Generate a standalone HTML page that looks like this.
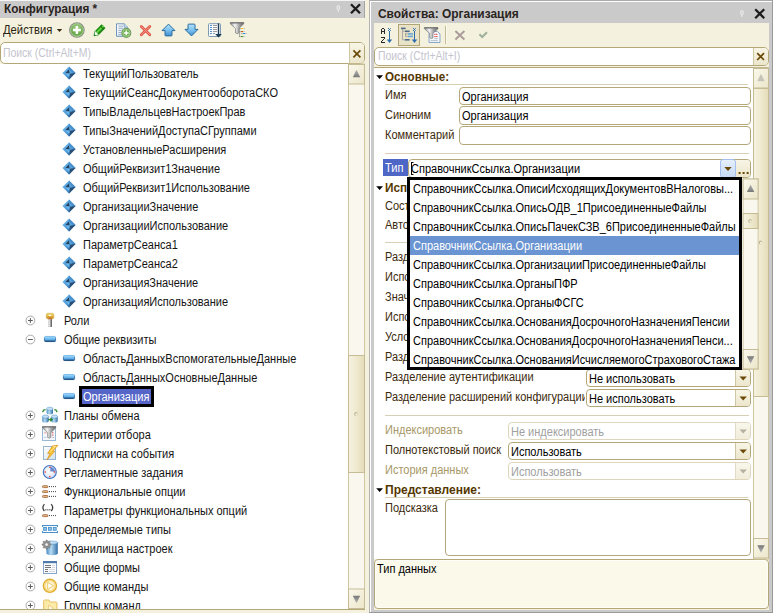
<!DOCTYPE html>
<html><head><meta charset="utf-8"><title>1C</title><style>
html,body{margin:0;padding:0;}
body{width:773px;height:613px;overflow:hidden;background:#f4f2de;font-family:"Liberation Sans",sans-serif;font-size:12px;color:#141414;position:relative;}
.a{position:absolute;}
.t{position:absolute;white-space:nowrap;font-size:12px;line-height:14px;height:14px;transform:scaleX(.917);transform-origin:0 50%;}
.b{position:absolute;white-space:nowrap;font-size:12px;line-height:14px;height:14px;font-weight:bold;transform:scaleX(.98);transform-origin:0 50%;}
.fld{position:absolute;background:#fff;border:1px solid #b5a878;border-radius:4px;box-sizing:border-box;}
.fldd{position:absolute;background:#fff;border:1px solid #ddd6bc;border-radius:4px;box-sizing:border-box;}
.btn{position:absolute;box-sizing:border-box;background:linear-gradient(180deg,#f8f5e6,#ece6cc);border-left:1px solid #cfc6a4;}
.btnd{position:absolute;box-sizing:border-box;background:linear-gradient(180deg,#f9f7ec,#f1edda);border-left:1px solid #e2dcc6;}
svg{position:absolute;left:0;top:0;overflow:visible;}
</style></head><body>
<div class="a" style="left:0;top:0;width:365px;height:1px;background:#f4f4f4"></div>
<div class="a" style="left:0;top:1px;width:365px;height:17px;background:#cacaca"></div>
<div class="a" style="left:364px;top:1px;width:1px;height:17px;background:#a4a4a4"></div>
<div class="b" style="left:4px;top:2px;color:#2a2421;">Конфигурация *</div>
<div class="t" style="left:3px;top:23px;color:#2a2210;transform:scaleX(.937)">Действия</div>
<div class="fld" style="left:0px;top:42px;width:365px;height:22px;border-radius:5px;overflow:hidden"><div class="btn" style="right:0;top:0;width:15px;height:20px"></div></div>
<div class="t" style="left:3px;top:45.5px;color:#c4c4ce;transform:scaleX(.868)">Поиск (Ctrl+Alt+M)</div>
<div class="a" style="left:0;top:64px;width:348px;height:545px;background:#fff"></div>
<div class="a" style="left:0;top:64px;width:348px;height:545px;overflow:hidden">
<div class="t" style="left:83px;top:3px">ТекущийПользователь</div>
<div class="t" style="left:83px;top:22px">ТекущийСеансДокументооборотаСКО</div>
<div class="t" style="left:83px;top:41px">ТипыВладельцевНастроекПрав</div>
<div class="t" style="left:83px;top:60px">ТипыЗначенийДоступаСГруппами</div>
<div class="t" style="left:83px;top:79px">УстановленныеРасширения</div>
<div class="t" style="left:83px;top:98px">ОбщийРеквизит1Значение</div>
<div class="t" style="left:83px;top:117px">ОбщийРеквизит1Использование</div>
<div class="t" style="left:83px;top:136px">ОрганизацииЗначение</div>
<div class="t" style="left:83px;top:155px">ОрганизацииИспользование</div>
<div class="t" style="left:83px;top:174px">ПараметрСеанса1</div>
<div class="t" style="left:83px;top:193px">ПараметрСеанса2</div>
<div class="t" style="left:83px;top:212px">ОрганизацияЗначение</div>
<div class="t" style="left:83px;top:231px">ОрганизацияИспользование</div>
<div class="t" style="left:64px;top:250px">Роли</div>
<div class="t" style="left:64px;top:269px">Общие реквизиты</div>
<div class="t" style="left:83px;top:288px">ОбластьДанныхВспомогательныеДанные</div>
<div class="t" style="left:83px;top:307px">ОбластьДанныхОсновныеДанные</div>
<div class="a" style="left:79px;top:322px;width:75px;height:21px;background:#000"></div>
<div class="a" style="left:82px;top:325px;width:69px;height:15px;background:#5666c8"></div>
<div class="t" style="left:83px;top:326px;color:#fff">Организация</div>
<div class="t" style="left:64px;top:345px">Планы обмена</div>
<div class="t" style="left:64px;top:364px">Критерии отбора</div>
<div class="t" style="left:64px;top:383px">Подписки на события</div>
<div class="t" style="left:64px;top:402px">Регламентные задания</div>
<div class="t" style="left:64px;top:421px">Функциональные опции</div>
<div class="t" style="left:64px;top:440px">Параметры функциональных опций</div>
<div class="t" style="left:64px;top:459px">Определяемые типы</div>
<div class="t" style="left:64px;top:478px">Хранилища настроек</div>
<div class="t" style="left:64px;top:497px">Общие формы</div>
<div class="t" style="left:64px;top:516px">Общие команды</div>
<div class="t" style="left:64px;top:535px">Группы команд</div>
<svg width="348" height="545" viewBox="0 0 348 545">
<defs>
<linearGradient id="gBar" x1="0" y1="0" x2="0" y2="1"><stop offset="0" stop-color="#a8dcfb"/><stop offset=".5" stop-color="#6cb8ee"/><stop offset="1" stop-color="#3b8ad2"/></linearGradient>
<linearGradient id="gBarS" x1="0" y1="0" x2="0" y2="1"><stop offset="0" stop-color="#74b8ea"/><stop offset=".5" stop-color="#3a78b4"/><stop offset="1" stop-color="#1b4a78"/></linearGradient>
<linearGradient id="gDia" x1="0" y1="0" x2="1" y2="1"><stop offset="0" stop-color="#7cc4f4"/><stop offset=".5" stop-color="#4f9ad6"/><stop offset="1" stop-color="#2f6ea6"/></linearGradient>
<radialGradient id="gGreen" cx=".5" cy=".35" r=".75"><stop offset="0" stop-color="#a8d090"/><stop offset=".6" stop-color="#69a94a"/><stop offset="1" stop-color="#86bd68"/></radialGradient>
<linearGradient id="gArr" x1="0" y1="0" x2="0" y2="1"><stop offset="0" stop-color="#b4e2fc"/><stop offset=".5" stop-color="#7cc2f0"/><stop offset="1" stop-color="#3f8ed0"/></linearGradient>
<linearGradient id="gFun" x1="0" y1="0" x2="1" y2="0"><stop offset="0" stop-color="#8a8a8a"/><stop offset=".35" stop-color="#f4f4f4"/><stop offset=".7" stop-color="#9a9a9a"/><stop offset="1" stop-color="#6a6a6a"/></linearGradient>
<linearGradient id="gCyl" x1="0" y1="0" x2="1" y2="0"><stop offset="0" stop-color="#4a8cc4"/><stop offset=".4" stop-color="#b8dcf4"/><stop offset="1" stop-color="#2f6ea6"/></linearGradient>
<radialGradient id="gGold" cx=".5" cy=".5" r=".6"><stop offset="0" stop-color="#fff6d8"/><stop offset=".55" stop-color="#f6d46a"/><stop offset="1" stop-color="#d8a420"/></radialGradient>
<radialGradient id="gClock" cx=".45" cy=".45" r=".6"><stop offset="0" stop-color="#ffffff"/><stop offset=".7" stop-color="#dfe8f8"/><stop offset="1" stop-color="#b8c8ea"/></radialGradient>
<linearGradient id="gDoc" x1="0" y1="0" x2="1" y2="1"><stop offset="0" stop-color="#ffffff"/><stop offset="1" stop-color="#cfe0f0"/></linearGradient>
<linearGradient id="gSb" x1="0" y1="0" x2="1" y2="0"><stop offset="0" stop-color="#f6f2e0"/><stop offset=".5" stop-color="#efe9cf"/><stop offset="1" stop-color="#e4dcb8"/></linearGradient>
<linearGradient id="gSbBtn" x1="0" y1="0" x2="1" y2="1"><stop offset="0" stop-color="#fbf9ee"/><stop offset="1" stop-color="#ebe5c8"/></linearGradient>
<linearGradient id="gTri" x1="0" y1="0" x2="0" y2="1"><stop offset="0" stop-color="#b8b8b8"/><stop offset="1" stop-color="#787878"/></linearGradient>
<linearGradient id="gTriD" x1="0" y1="0" x2="0" y2="1"><stop offset="0" stop-color="#787878"/><stop offset="1" stop-color="#b8b8b8"/></linearGradient>
<linearGradient id="gKey" x1="0" y1="0" x2="0" y2="1"><stop offset="0" stop-color="#f2dc7c"/><stop offset=".55" stop-color="#dcb23c"/><stop offset="1" stop-color="#c88a30"/></linearGradient>
</defs>
<g transform="translate(69,9)"><path d="M0 -6.6L6.6 0L0 6.6L-6.6 0Z" fill="url(#gDia)"/><path d="M0 -6.6L6.6 0L3.6 0.2L0 -3.6Z" fill="#4a90cc"/><path d="M0.8 0.6L6.3999999999999995 0.1L0.1 6.3999999999999995Z" fill="#2b4f72"/><path d="M0.8 0.6L0.1 6.3999999999999995L-1.6 4.8Z" fill="#3f7fb8"/><path d="M-3.7 0.2L0 -3.7L0.8 0.6Z" fill="#25405a"/><path d="M-3.7 0.2L0.8 0.6L0 3.9Z" fill="#68b6f0"/><path d="M0 -3.7L0.8 0.6L3.6 0.2Z" fill="#5aa4e0"/></g><g transform="translate(69,28)"><path d="M0 -6.6L6.6 0L0 6.6L-6.6 0Z" fill="url(#gDia)"/><path d="M0 -6.6L6.6 0L3.6 0.2L0 -3.6Z" fill="#4a90cc"/><path d="M0.8 0.6L6.3999999999999995 0.1L0.1 6.3999999999999995Z" fill="#2b4f72"/><path d="M0.8 0.6L0.1 6.3999999999999995L-1.6 4.8Z" fill="#3f7fb8"/><path d="M-3.7 0.2L0 -3.7L0.8 0.6Z" fill="#25405a"/><path d="M-3.7 0.2L0.8 0.6L0 3.9Z" fill="#68b6f0"/><path d="M0 -3.7L0.8 0.6L3.6 0.2Z" fill="#5aa4e0"/></g><g transform="translate(69,47)"><path d="M0 -6.6L6.6 0L0 6.6L-6.6 0Z" fill="url(#gDia)"/><path d="M0 -6.6L6.6 0L3.6 0.2L0 -3.6Z" fill="#4a90cc"/><path d="M0.8 0.6L6.3999999999999995 0.1L0.1 6.3999999999999995Z" fill="#2b4f72"/><path d="M0.8 0.6L0.1 6.3999999999999995L-1.6 4.8Z" fill="#3f7fb8"/><path d="M-3.7 0.2L0 -3.7L0.8 0.6Z" fill="#25405a"/><path d="M-3.7 0.2L0.8 0.6L0 3.9Z" fill="#68b6f0"/><path d="M0 -3.7L0.8 0.6L3.6 0.2Z" fill="#5aa4e0"/></g><g transform="translate(69,66)"><path d="M0 -6.6L6.6 0L0 6.6L-6.6 0Z" fill="url(#gDia)"/><path d="M0 -6.6L6.6 0L3.6 0.2L0 -3.6Z" fill="#4a90cc"/><path d="M0.8 0.6L6.3999999999999995 0.1L0.1 6.3999999999999995Z" fill="#2b4f72"/><path d="M0.8 0.6L0.1 6.3999999999999995L-1.6 4.8Z" fill="#3f7fb8"/><path d="M-3.7 0.2L0 -3.7L0.8 0.6Z" fill="#25405a"/><path d="M-3.7 0.2L0.8 0.6L0 3.9Z" fill="#68b6f0"/><path d="M0 -3.7L0.8 0.6L3.6 0.2Z" fill="#5aa4e0"/></g><g transform="translate(69,85)"><path d="M0 -6.6L6.6 0L0 6.6L-6.6 0Z" fill="url(#gDia)"/><path d="M0 -6.6L6.6 0L3.6 0.2L0 -3.6Z" fill="#4a90cc"/><path d="M0.8 0.6L6.3999999999999995 0.1L0.1 6.3999999999999995Z" fill="#2b4f72"/><path d="M0.8 0.6L0.1 6.3999999999999995L-1.6 4.8Z" fill="#3f7fb8"/><path d="M-3.7 0.2L0 -3.7L0.8 0.6Z" fill="#25405a"/><path d="M-3.7 0.2L0.8 0.6L0 3.9Z" fill="#68b6f0"/><path d="M0 -3.7L0.8 0.6L3.6 0.2Z" fill="#5aa4e0"/></g><g transform="translate(69,104)"><path d="M0 -6.6L6.6 0L0 6.6L-6.6 0Z" fill="url(#gDia)"/><path d="M0 -6.6L6.6 0L3.6 0.2L0 -3.6Z" fill="#4a90cc"/><path d="M0.8 0.6L6.3999999999999995 0.1L0.1 6.3999999999999995Z" fill="#2b4f72"/><path d="M0.8 0.6L0.1 6.3999999999999995L-1.6 4.8Z" fill="#3f7fb8"/><path d="M-3.7 0.2L0 -3.7L0.8 0.6Z" fill="#25405a"/><path d="M-3.7 0.2L0.8 0.6L0 3.9Z" fill="#68b6f0"/><path d="M0 -3.7L0.8 0.6L3.6 0.2Z" fill="#5aa4e0"/></g><g transform="translate(69,123)"><path d="M0 -6.6L6.6 0L0 6.6L-6.6 0Z" fill="url(#gDia)"/><path d="M0 -6.6L6.6 0L3.6 0.2L0 -3.6Z" fill="#4a90cc"/><path d="M0.8 0.6L6.3999999999999995 0.1L0.1 6.3999999999999995Z" fill="#2b4f72"/><path d="M0.8 0.6L0.1 6.3999999999999995L-1.6 4.8Z" fill="#3f7fb8"/><path d="M-3.7 0.2L0 -3.7L0.8 0.6Z" fill="#25405a"/><path d="M-3.7 0.2L0.8 0.6L0 3.9Z" fill="#68b6f0"/><path d="M0 -3.7L0.8 0.6L3.6 0.2Z" fill="#5aa4e0"/></g><g transform="translate(69,142)"><path d="M0 -6.6L6.6 0L0 6.6L-6.6 0Z" fill="url(#gDia)"/><path d="M0 -6.6L6.6 0L3.6 0.2L0 -3.6Z" fill="#4a90cc"/><path d="M0.8 0.6L6.3999999999999995 0.1L0.1 6.3999999999999995Z" fill="#2b4f72"/><path d="M0.8 0.6L0.1 6.3999999999999995L-1.6 4.8Z" fill="#3f7fb8"/><path d="M-3.7 0.2L0 -3.7L0.8 0.6Z" fill="#25405a"/><path d="M-3.7 0.2L0.8 0.6L0 3.9Z" fill="#68b6f0"/><path d="M0 -3.7L0.8 0.6L3.6 0.2Z" fill="#5aa4e0"/></g><g transform="translate(69,161)"><path d="M0 -6.6L6.6 0L0 6.6L-6.6 0Z" fill="url(#gDia)"/><path d="M0 -6.6L6.6 0L3.6 0.2L0 -3.6Z" fill="#4a90cc"/><path d="M0.8 0.6L6.3999999999999995 0.1L0.1 6.3999999999999995Z" fill="#2b4f72"/><path d="M0.8 0.6L0.1 6.3999999999999995L-1.6 4.8Z" fill="#3f7fb8"/><path d="M-3.7 0.2L0 -3.7L0.8 0.6Z" fill="#25405a"/><path d="M-3.7 0.2L0.8 0.6L0 3.9Z" fill="#68b6f0"/><path d="M0 -3.7L0.8 0.6L3.6 0.2Z" fill="#5aa4e0"/></g><g transform="translate(69,180)"><path d="M0 -6.6L6.6 0L0 6.6L-6.6 0Z" fill="url(#gDia)"/><path d="M0 -6.6L6.6 0L3.6 0.2L0 -3.6Z" fill="#4a90cc"/><path d="M0.8 0.6L6.3999999999999995 0.1L0.1 6.3999999999999995Z" fill="#2b4f72"/><path d="M0.8 0.6L0.1 6.3999999999999995L-1.6 4.8Z" fill="#3f7fb8"/><path d="M-3.7 0.2L0 -3.7L0.8 0.6Z" fill="#25405a"/><path d="M-3.7 0.2L0.8 0.6L0 3.9Z" fill="#68b6f0"/><path d="M0 -3.7L0.8 0.6L3.6 0.2Z" fill="#5aa4e0"/></g><g transform="translate(69,199)"><path d="M0 -6.6L6.6 0L0 6.6L-6.6 0Z" fill="url(#gDia)"/><path d="M0 -6.6L6.6 0L3.6 0.2L0 -3.6Z" fill="#4a90cc"/><path d="M0.8 0.6L6.3999999999999995 0.1L0.1 6.3999999999999995Z" fill="#2b4f72"/><path d="M0.8 0.6L0.1 6.3999999999999995L-1.6 4.8Z" fill="#3f7fb8"/><path d="M-3.7 0.2L0 -3.7L0.8 0.6Z" fill="#25405a"/><path d="M-3.7 0.2L0.8 0.6L0 3.9Z" fill="#68b6f0"/><path d="M0 -3.7L0.8 0.6L3.6 0.2Z" fill="#5aa4e0"/></g><g transform="translate(69,218)"><path d="M0 -6.6L6.6 0L0 6.6L-6.6 0Z" fill="url(#gDia)"/><path d="M0 -6.6L6.6 0L3.6 0.2L0 -3.6Z" fill="#4a90cc"/><path d="M0.8 0.6L6.3999999999999995 0.1L0.1 6.3999999999999995Z" fill="#2b4f72"/><path d="M0.8 0.6L0.1 6.3999999999999995L-1.6 4.8Z" fill="#3f7fb8"/><path d="M-3.7 0.2L0 -3.7L0.8 0.6Z" fill="#25405a"/><path d="M-3.7 0.2L0.8 0.6L0 3.9Z" fill="#68b6f0"/><path d="M0 -3.7L0.8 0.6L3.6 0.2Z" fill="#5aa4e0"/></g><g transform="translate(69,237)"><path d="M0 -6.6L6.6 0L0 6.6L-6.6 0Z" fill="url(#gDia)"/><path d="M0 -6.6L6.6 0L3.6 0.2L0 -3.6Z" fill="#4a90cc"/><path d="M0.8 0.6L6.3999999999999995 0.1L0.1 6.3999999999999995Z" fill="#2b4f72"/><path d="M0.8 0.6L0.1 6.3999999999999995L-1.6 4.8Z" fill="#3f7fb8"/><path d="M-3.7 0.2L0 -3.7L0.8 0.6Z" fill="#25405a"/><path d="M-3.7 0.2L0.8 0.6L0 3.9Z" fill="#68b6f0"/><path d="M0 -3.7L0.8 0.6L3.6 0.2Z" fill="#5aa4e0"/></g><circle cx="30.4" cy="256.5" r="4.4" fill="#fff" stroke="#a4a4a4" stroke-width="1"/><circle cx="30.4" cy="256.5" r="5.1" fill="none" stroke="#ececec" stroke-width=".5"/><rect x="28.0" y="256.0" width="4.8" height="1" fill="#5c5c5c"/><rect x="29.9" y="254.1" width="1" height="4.8" fill="#5c5c5c"/><rect x="48.2" y="254.6" width="3.7" height="8.4" fill="#b4b4b4"/><rect x="48.9" y="254.6" width="1.2" height="8.4" fill="#dedede"/><rect x="50.7" y="254.6" width="1.2" height="8.4" fill="#666"/><rect x="48.2" y="256.4" width=".9" height="1" fill="#fff"/><rect x="48.2" y="258.6" width=".9" height="1" fill="#fff"/><rect x="48.2" y="260.8" width=".9" height="1" fill="#fff"/><rect x="46.3" y="249.3" width="7.5" height="5.5" rx="1.5" fill="url(#gKey)" stroke="#d4a83c" stroke-width=".6"/><rect x="48.6" y="250.7" width="2.8" height="1.3" rx=".6" fill="#fffbe6"/><ellipse cx="50" cy="254.2" rx="1.8" ry="1" fill="#d06a28" opacity=".8"/><circle cx="30.4" cy="275.5" r="4.4" fill="#fff" stroke="#a4a4a4" stroke-width="1"/><circle cx="30.4" cy="275.5" r="5.1" fill="none" stroke="#ececec" stroke-width=".5"/><rect x="28.0" y="275.0" width="4.8" height="1" fill="#5c5c5c"/><rect x="44.45" y="272.45" width="11.1" height="5.1" rx="1" fill="url(#gBar)" stroke="url(#gBarS)" stroke-width=".9"/><rect x="45" y="276.6" width="10" height="1" rx=".5" fill="#1b4a78" opacity=".75"/><rect x="63.45" y="291.45" width="11.1" height="5.1" rx="1" fill="url(#gBar)" stroke="url(#gBarS)" stroke-width=".9"/><rect x="64" y="295.6" width="10" height="1" rx=".5" fill="#1b4a78" opacity=".75"/><rect x="63.45" y="310.45" width="11.1" height="5.1" rx="1" fill="url(#gBar)" stroke="url(#gBarS)" stroke-width=".9"/><rect x="64" y="314.6" width="10" height="1" rx=".5" fill="#1b4a78" opacity=".75"/><rect x="63.45" y="329.45" width="11.1" height="5.1" rx="1" fill="url(#gBar)" stroke="url(#gBarS)" stroke-width=".9"/><rect x="64" y="333.6" width="10" height="1" rx=".5" fill="#1b4a78" opacity=".75"/><circle cx="30.4" cy="351.5" r="4.4" fill="#fff" stroke="#a4a4a4" stroke-width="1"/><circle cx="30.4" cy="351.5" r="5.1" fill="none" stroke="#ececec" stroke-width=".5"/><rect x="28.0" y="351.0" width="4.8" height="1" fill="#5c5c5c"/><rect x="29.9" y="349.1" width="1" height="4.8" fill="#5c5c5c"/><path d="M46.6 344.8V348.79999999999995A3.2 1.6 0 0 0 53.0 348.79999999999995V344.8Z" fill="url(#gCyl)"/><ellipse cx="49.800000000000004" cy="344.8" rx="3.2" ry="1.6" fill="#c4e0f4" stroke="#4a8cc4" stroke-width=".5"/><path d="M42.3 352.6V357.0A3.2 1.6 0 0 0 48.699999999999996 357.0V352.6Z" fill="url(#gCyl)"/><ellipse cx="45.5" cy="352.6" rx="3.2" ry="1.6" fill="#c4e0f4" stroke="#4a8cc4" stroke-width=".5"/><path d="M51.3 352.6V357.0A3.2 1.6 0 0 0 57.699999999999996 357.0V352.6Z" fill="url(#gCyl)"/><ellipse cx="54.5" cy="352.6" rx="3.2" ry="1.6" fill="#c4e0f4" stroke="#4a8cc4" stroke-width=".5"/><path d="M42.2 345.2h3.4v1.2l-1-.2l-1.6 2.2l-1-.8l1.6-2z" fill="#2f8a2f"/><path d="M57.6 345.2h-3.4v1.2l1-.2l1.6 2.2l1-.8l-1.6-2z" fill="#2f8a2f" transform="translate(0,0)"/><path d="M48 355.6h4M50.4 354l1.8 1.6l-1.8 1.6" stroke="#2f8a2f" stroke-width="1.2" fill="none"/><circle cx="30.4" cy="370.5" r="4.4" fill="#fff" stroke="#a4a4a4" stroke-width="1"/><circle cx="30.4" cy="370.5" r="5.1" fill="none" stroke="#ececec" stroke-width=".5"/><rect x="28.0" y="370.0" width="4.8" height="1" fill="#5c5c5c"/><rect x="29.9" y="368.1" width="1" height="4.8" fill="#5c5c5c"/><rect x="42.5" y="363.5" width="13" height="13" fill="#f4f8fc" stroke="#9ab8d4" stroke-width="1"/><rect x="44" y="368.3" width="2.6" height="1" fill="#e8a0a0"/><rect x="52" y="368.3" width="1.4" height="1" fill="#e05050"/><rect x="52" y="370.6" width="1.4" height="1" fill="#e05050"/><rect x="44" y="373" width="2.4" height=".9" fill="#b8cce0"/><rect x="52.6" y="373" width="1.2" height=".9" fill="#8aa4c0"/><path d="M42.4 362.6H55.8V363.8L50.842 368.632V373.40000000000003Q49.233999999999995 374.80000000000007 47.626 373.40000000000003V368.632L42.4 363.8Z" fill="url(#gFun)" stroke="#6e6e6e" stroke-width=".6"/><rect x="42.4" y="362.20000000000005" width="13.4" height="1.2" rx=".5" fill="#777"/><circle cx="30.4" cy="389.5" r="4.4" fill="#fff" stroke="#a4a4a4" stroke-width="1"/><circle cx="30.4" cy="389.5" r="5.1" fill="none" stroke="#ececec" stroke-width=".5"/><rect x="28.0" y="389.0" width="4.8" height="1" fill="#5c5c5c"/><rect x="29.9" y="387.1" width="1" height="4.8" fill="#5c5c5c"/><rect x="43.5" y="382.5" width="12" height="13" fill="url(#gDoc)" stroke="#9ab4cc" stroke-width="1"/><path d="M52.6 381.8L58 381.3L52.6 387.4L54.8 387.3L47 395.9L50 389.3L47.6 389.5Z" fill="#f8c432" stroke="#d68c12" stroke-width=".6"/><path d="M53 382.6L55.6 382.4L50.4 388" fill="none" stroke="#fff2b0" stroke-width=".8"/><circle cx="30.4" cy="408.5" r="4.4" fill="#fff" stroke="#a4a4a4" stroke-width="1"/><circle cx="30.4" cy="408.5" r="5.1" fill="none" stroke="#ececec" stroke-width=".5"/><rect x="28.0" y="408.0" width="4.8" height="1" fill="#5c5c5c"/><rect x="29.9" y="406.1" width="1" height="4.8" fill="#5c5c5c"/><circle cx="49.8" cy="408" r="6.5" fill="url(#gClock)" stroke="#4174c2" stroke-width="1.1"/><path d="M49.8 408V402.8A5.2 5.2 0 0 1 55.0 408Z" fill="#5a7cc8" opacity=".9"/><rect x="49.099999999999994" y="402.7" width="1.4" height="1.4" fill="#f04030"/><rect x="53.699999999999996" y="407.3" width="1.4" height="1.4" fill="#f04030"/><rect x="49.099999999999994" y="411.90000000000003" width="1.4" height="1.4" fill="#f04030"/><rect x="44.49999999999999" y="407.3" width="1.4" height="1.4" fill="#f04030"/><path d="M49.8 404V408H53.4" stroke="#fff" stroke-width="1" fill="none"/><circle cx="30.4" cy="427.5" r="4.4" fill="#fff" stroke="#a4a4a4" stroke-width="1"/><circle cx="30.4" cy="427.5" r="5.1" fill="none" stroke="#ececec" stroke-width=".5"/><rect x="28.0" y="427.0" width="4.8" height="1" fill="#5c5c5c"/><rect x="29.9" y="425.1" width="1" height="4.8" fill="#5c5c5c"/><rect x="42.4" y="421.7" width="5.6" height="1.9" rx=".95" fill="#e6bc90" stroke="#a0602c" stroke-width=".8"/><rect x="49" y="422.09999999999997" width="1" height="1" fill="#444"/><rect x="51" y="422.09999999999997" width="1" height="1" fill="#444"/><rect x="53" y="422.09999999999997" width="1" height="1" fill="#444"/><rect x="55" y="422.09999999999997" width="1" height="1" fill="#444"/><rect x="42.4" y="426.7" width="5.6" height="1.9" rx=".95" fill="#e6bc90" stroke="#a0602c" stroke-width=".8"/><rect x="49" y="427.09999999999997" width="1" height="1" fill="#444"/><rect x="51" y="427.09999999999997" width="1" height="1" fill="#444"/><rect x="53" y="427.09999999999997" width="1" height="1" fill="#444"/><rect x="55" y="427.09999999999997" width="1" height="1" fill="#444"/><rect x="42.4" y="431.5" width="5.6" height="1.9" rx=".95" fill="#e6bc90" stroke="#a0602c" stroke-width=".8"/><rect x="49" y="431.9" width="1" height="1" fill="#444"/><rect x="51" y="431.9" width="1" height="1" fill="#444"/><rect x="53" y="431.9" width="1" height="1" fill="#444"/><rect x="55" y="431.9" width="1" height="1" fill="#444"/><circle cx="30.4" cy="446.5" r="4.4" fill="#fff" stroke="#a4a4a4" stroke-width="1"/><circle cx="30.4" cy="446.5" r="5.1" fill="none" stroke="#ececec" stroke-width=".5"/><rect x="28.0" y="446.0" width="4.8" height="1" fill="#5c5c5c"/><rect x="29.9" y="444.1" width="1" height="4.8" fill="#5c5c5c"/><rect x="42.4" y="450.7" width="5.6" height="1.9" rx=".95" fill="#e6bc90" stroke="#a0602c" stroke-width=".8"/><rect x="49" y="451.09999999999997" width="1" height="1" fill="#444"/><rect x="51" y="451.09999999999997" width="1" height="1" fill="#444"/><rect x="53" y="451.09999999999997" width="1" height="1" fill="#444"/><rect x="55" y="451.09999999999997" width="1" height="1" fill="#444"/><path d="M44.4 440.2Q41.4 443.6 44.4 447M51.2 440.2Q54.2 443.6 51.2 447" stroke="#3c3c3c" stroke-width="1.25" fill="none"/><rect x="45.3" y="445.2" width="1.1" height="1.2" fill="#3c3c3c"/><rect x="47.3" y="445.2" width="1.1" height="1.2" fill="#3c3c3c"/><rect x="49.3" y="445.2" width="1.1" height="1.2" fill="#3c3c3c"/><circle cx="30.4" cy="465.5" r="4.4" fill="#fff" stroke="#a4a4a4" stroke-width="1"/><circle cx="30.4" cy="465.5" r="5.1" fill="none" stroke="#ececec" stroke-width=".5"/><rect x="28.0" y="465.0" width="4.8" height="1" fill="#5c5c5c"/><rect x="29.9" y="463.1" width="1" height="4.8" fill="#5c5c5c"/><rect x="42" y="461" width="16" height="1" fill="#4790cc"/><rect x="42" y="468" width="16" height="1" fill="#4790cc"/><rect x="42" y="461" width="1" height="2" fill="#4790cc"/><rect x="57" y="461" width="1" height="2" fill="#4790cc"/><rect x="42" y="467" width="1" height="2" fill="#4790cc"/><rect x="57" y="467" width="1" height="2" fill="#4790cc"/><rect x="43.6" y="463.4" width="2.9" height="2.9" fill="#8ec6ee" stroke="#4790cc" stroke-width=".9"/><rect x="48.45" y="463.4" width="2.9" height="2.9" fill="#8ec6ee" stroke="#4790cc" stroke-width=".9"/><rect x="53.3" y="463.4" width="2.9" height="2.9" fill="#8ec6ee" stroke="#4790cc" stroke-width=".9"/><circle cx="30.4" cy="484.5" r="4.4" fill="#fff" stroke="#a4a4a4" stroke-width="1"/><circle cx="30.4" cy="484.5" r="5.1" fill="none" stroke="#ececec" stroke-width=".5"/><rect x="28.0" y="484.0" width="4.8" height="1" fill="#5c5c5c"/><rect x="29.9" y="482.1" width="1" height="4.8" fill="#5c5c5c"/><path d="M46.4 478.6V489.59999999999997A5.7 1.6 0 0 0 57.8 489.59999999999997V478.6Z" fill="url(#gCyl)"/><ellipse cx="52.1" cy="478.6" rx="5.7" ry="1.6" fill="#c4e0f4" stroke="#4a8cc4" stroke-width=".5"/><path d="M51.17 480.10L51.17 481.10L49.78 481.52L49.50 482.20L50.19 483.48L49.48 484.19L48.20 483.50L47.52 483.78L47.10 485.17L46.10 485.17L45.68 483.78L45.00 483.50L43.72 484.19L43.01 483.48L43.70 482.20L43.42 481.52L42.03 481.10L42.03 480.10L43.42 479.68L43.70 479.00L43.01 477.72L43.72 477.01L45.00 477.70L45.68 477.42L46.10 476.03L47.10 476.03L47.52 477.42L48.20 477.70L49.48 477.01L50.19 477.72L49.50 479.00L49.78 479.68Z" fill="#8e8e8e" stroke="#747474" stroke-width=".5"/><circle cx="46.6" cy="480.6" r="1.4" fill="#f0f0f0"/><circle cx="30.4" cy="503.5" r="4.4" fill="#fff" stroke="#a4a4a4" stroke-width="1"/><circle cx="30.4" cy="503.5" r="5.1" fill="none" stroke="#ececec" stroke-width=".5"/><rect x="28.0" y="503.0" width="4.8" height="1" fill="#5c5c5c"/><rect x="29.9" y="501.1" width="1" height="4.8" fill="#5c5c5c"/><rect x="43.5" y="497.5" width="13" height="12" fill="#fbfcfe" stroke="#86a6c8" stroke-width="1"/><rect x="43" y="497" width="14" height="2.2" fill="#4f7cac"/><rect x="45" y="501" width="6" height="1" fill="#767676"/><rect x="52" y="501" width="3" height="1" fill="#d4d8e0"/><rect x="45" y="503" width="6" height="1" fill="#767676"/><rect x="52" y="503" width="3" height="1" fill="#d4d8e0"/><rect x="45" y="505" width="3" height="1" fill="#767676"/><rect x="49" y="505" width="6" height="1" fill="#d4d8e0"/><rect x="45" y="507" width="3" height="1" fill="#767676"/><rect x="49" y="507" width="6" height="1" fill="#d4d8e0"/><circle cx="30.4" cy="522.5" r="4.4" fill="#fff" stroke="#a4a4a4" stroke-width="1"/><circle cx="30.4" cy="522.5" r="5.1" fill="none" stroke="#ececec" stroke-width=".5"/><rect x="28.0" y="522.0" width="4.8" height="1" fill="#5c5c5c"/><rect x="29.9" y="520.1" width="1" height="4.8" fill="#5c5c5c"/><circle cx="49.9" cy="521.8" r="6.5" fill="#fdf3d2" stroke="#e2ae32" stroke-width="1.5"/><circle cx="49.9" cy="521.8" r="5.2" fill="none" stroke="#f6d878" stroke-width="1.2"/><path d="M47.699999999999996 518.4L53.5 521.8L47.699999999999996 525.1999999999999Z" fill="#fff" stroke="#e8c050" stroke-width=".8"/><circle cx="30.4" cy="541.5" r="4.4" fill="#fff" stroke="#a4a4a4" stroke-width="1"/><circle cx="30.4" cy="541.5" r="5.1" fill="none" stroke="#ececec" stroke-width=".5"/><rect x="28.0" y="541.0" width="4.8" height="1" fill="#5c5c5c"/><rect x="29.9" y="539.1" width="1" height="4.8" fill="#5c5c5c"/><path d="M43.6 537.2Q43.6 536.0 44.800000000000004 536.0H49.0L50.2 538.0H56.0Q57.0 538.0 57.0 539.2V550.6H43.6Z" fill="#fbeaa8" stroke="#e2bc58" stroke-width=".9"/><path d="M48.6 541.0L53.2 544.2L48.6 547.4Z" fill="#fffbe8" stroke="#e2bc58" stroke-width=".6"/></svg>
</div>
<div class="a" style="left:369px;top:0;width:404px;height:613px;background:#cacaca"></div>
<div class="a" style="left:369px;top:0;width:404px;height:1px;background:#aaaaaa"></div>
<div class="a" style="left:369px;top:0;width:1px;height:613px;background:#b4b4b4"></div>
<div class="a" style="left:370px;top:1px;width:402px;height:1px;background:#fff"></div>
<div class="a" style="left:370px;top:1px;width:1px;height:611px;background:#fff"></div>
<div class="a" style="left:369px;top:612px;width:404px;height:1px;background:#9a9a9a"></div>
<div class="a" style="left:772px;top:0;width:1px;height:613px;background:#9a9a9a"></div>
<div class="a" style="left:374px;top:23px;width:395px;height:587px;background:#f4f2de"></div>
<div class="b" style="left:378px;top:7px;color:#2a2421;transform:scaleX(.994)">Свойства: Организация</div>
<div class="fld" style="left:374px;top:47px;width:395px;height:19px;border-radius:5px;overflow:hidden"><div class="btn" style="right:0;top:0;width:15px;height:17px"></div></div>
<div class="t" style="left:378px;top:48.8px;color:#c4c4ce;transform:scaleX(.868)">Поиск (Ctrl+Alt+I)</div>
<div class="a" style="left:374px;top:68px;width:380px;height:491px;background:#fff"></div>
<div class="a" style="left:374px;top:67px;width:395px;height:1px;background:#b5a878"></div>
<div class="b" style="left:385px;top:70px;color:#543700;transform:scaleX(0.97)">Основные:</div>
<div class="a" style="left:385px;top:84px;width:363px;height:1px;background:#d8d0b4"></div>
<div class="b" style="left:385px;top:483px;color:#543700;transform:scaleX(1.0)">Представление:</div>
<div class="a" style="left:385px;top:497px;width:363px;height:1px;background:#d8d0b4"></div>
<div class="t" style="left:385.4px;top:88px;color:#3c2a0c;">Имя</div>
<div class="t" style="left:385.4px;top:108px;color:#3c2a0c;">Синоним</div>
<div class="t" style="left:385.4px;top:128px;color:#3c2a0c;">Комментарий</div>
<div class="fld" style="left:459px;top:87px;width:292px;height:18px"></div>
<div class="fld" style="left:459px;top:106px;width:292px;height:19px"></div>
<div class="fld" style="left:459px;top:126px;width:292px;height:19px"></div>
<div class="t" style="left:462px;top:90px;color:#000;">Организация</div>
<div class="t" style="left:462px;top:109px;color:#000;">Организация</div>
<div class="a" style="left:385px;top:153px;width:364px;height:1px;background:#d8d0b4"></div>
<div class="a" style="left:383px;top:159px;width:25px;height:17px;background:#4e66c6"></div>
<div class="t" style="left:385px;top:160.5px;color:#fff;">Тип</div>
<div class="fld" style="left:408px;top:159px;width:343px;height:19px;overflow:hidden"><div class="btn" style="right:0;top:0;width:15px;height:17px;border-left:none"></div></div>
<div class="a" style="left:720px;top:159px;width:16px;height:19px;box-sizing:border-box;border:1px solid #a4bfee;border-radius:3px;background:linear-gradient(180deg,#e6effc,#c6d9f7)"></div>
<div class="t" style="left:411px;top:162px;color:#000;">СправочникСсылка.Организации</div>
<div class="b" style="left:385px;top:181px;color:#543700;">Испо</div>
<div class="t" style="left:385.4px;top:199px;color:#3c2a0c;">Сост</div>
<div class="t" style="left:385.4px;top:218px;color:#3c2a0c;">Авто</div>
<div class="t" style="left:385.4px;top:250px;color:#3c2a0c;">Разд</div>
<div class="t" style="left:385.4px;top:270px;color:#3c2a0c;">Испо</div>
<div class="t" style="left:385.4px;top:290px;color:#3c2a0c;">Знач</div>
<div class="t" style="left:385.4px;top:310px;color:#3c2a0c;">Испо</div>
<div class="t" style="left:385.4px;top:330px;color:#3c2a0c;">Усло</div>
<div class="t" style="left:385.4px;top:350px;color:#3c2a0c;">Разд</div>
<div class="a" style="left:385px;top:242px;width:22px;height:1px;background:#d8d0b4"></div>
<div class="t" style="left:385.4px;top:370px;color:#3c2a0c;">Разделение аутентификации</div>
<div class="a" style="left:385.4px;top:389px;width:199.6px;height:18px;overflow:hidden"><div class="t" style="left:0;top:1px;color:#3c2a0c">Разделение расширений конфигурации</div></div>
<div class="fld" style="left:586px;top:369px;width:165px;height:18px;overflow:hidden"><div class="btn" style="right:0;top:0;width:15px;height:16px"></div></div>
<div class="t" style="left:589px;top:371.5px;color:#000;">Не использовать</div>
<div class="fld" style="left:586px;top:389px;width:165px;height:18px;overflow:hidden"><div class="btn" style="right:0;top:0;width:15px;height:16px"></div></div>
<div class="t" style="left:589px;top:391.5px;color:#000;">Не использовать</div>
<div class="a" style="left:385px;top:415px;width:364px;height:1px;background:#d8d0b4"></div>
<div class="t" style="left:385.4px;top:423px;color:#a89868;">Индексировать</div>
<div class="t" style="left:385.4px;top:443px;color:#3c2a0c;">Полнотекстовый поиск</div>
<div class="t" style="left:385.4px;top:463px;color:#a89868;">История данных</div>
<div class="fldd" style="left:508px;top:422px;width:243px;height:18px;overflow:hidden"><div class="btnd" style="right:0;top:0;width:15px;height:16px"></div></div>
<div class="t" style="left:511px;top:424.5px;color:#a0a0a0;">Не индексировать</div>
<div class="fld" style="left:508px;top:442px;width:243px;height:18px;overflow:hidden"><div class="btn" style="right:0;top:0;width:15px;height:16px"></div></div>
<div class="t" style="left:511px;top:444.5px;color:#000;">Использовать</div>
<div class="fldd" style="left:508px;top:462px;width:243px;height:18px;overflow:hidden"><div class="btnd" style="right:0;top:0;width:15px;height:16px"></div></div>
<div class="t" style="left:511px;top:464.5px;color:#a0a0a0;">Использовать</div>
<div class="t" style="left:385.4px;top:501px;color:#3c2a0c;">Подсказка</div>
<div class="fld" style="left:445px;top:499px;width:306px;height:57px"></div>
<div class="a" style="left:407px;top:177px;width:335px;height:193px;background:#000"></div>
<div class="a" style="left:410px;top:180px;width:329px;height:187px;background:#fff"></div>
<div class="t" style="left:412.5px;top:181.5px;color:#000;">СправочникСсылка.ОписиИсходящихДокументовВНалоговы...</div>
<div class="t" style="left:412.5px;top:200.5px;color:#000;">СправочникСсылка.ОписьОДВ_1ПрисоединенныеФайлы</div>
<div class="t" style="left:412.5px;top:219.5px;color:#000;">СправочникСсылка.ОписьПачекСЗВ_6ПрисоединенныеФайлы</div>
<div class="a" style="left:410px;top:236px;width:329px;height:19px;background:#6a94d2"></div>
<div class="t" style="left:412.5px;top:238.5px;color:#fff;">СправочникСсылка.Организации</div>
<div class="t" style="left:412.5px;top:257.5px;color:#000;">СправочникСсылка.ОрганизацииПрисоединенныеФайлы</div>
<div class="t" style="left:412.5px;top:276.5px;color:#000;">СправочникСсылка.ОрганыПФР</div>
<div class="t" style="left:412.5px;top:295.5px;color:#000;">СправочникСсылка.ОрганыФСГС</div>
<div class="t" style="left:412.5px;top:314.5px;color:#000;">СправочникСсылка.ОснованияДосрочногоНазначенияПенсии</div>
<div class="t" style="left:412.5px;top:333.5px;color:#000;">СправочникСсылка.ОснованияДосрочногоНазначенияПенси...</div>
<div class="t" style="left:412.5px;top:352.5px;color:#000;">СправочникСсылка.ОснованияИсчисляемогоСтраховогоСтажа</div>
<div class="fld" style="left:374px;top:559px;width:395px;height:50px;background:#fbf9ea;border-radius:4px;box-shadow:inset 0 0 0 1px #fffef8"></div>
<div class="t" style="left:377px;top:562px;color:#000;">Тип данных</div>
<svg width="773" height="613" viewBox="0 0 773 613">
<defs>
<linearGradient id="ogBar" x1="0" y1="0" x2="0" y2="1"><stop offset="0" stop-color="#a8dcfb"/><stop offset=".5" stop-color="#6cb8ee"/><stop offset="1" stop-color="#3b8ad2"/></linearGradient>
<linearGradient id="ogBarS" x1="0" y1="0" x2="0" y2="1"><stop offset="0" stop-color="#74b8ea"/><stop offset=".5" stop-color="#3a78b4"/><stop offset="1" stop-color="#1b4a78"/></linearGradient>
<linearGradient id="ogDia" x1="0" y1="0" x2="1" y2="1"><stop offset="0" stop-color="#7cc4f4"/><stop offset=".5" stop-color="#4f9ad6"/><stop offset="1" stop-color="#2f6ea6"/></linearGradient>
<radialGradient id="ogGreen" cx=".5" cy=".35" r=".75"><stop offset="0" stop-color="#a8d090"/><stop offset=".6" stop-color="#69a94a"/><stop offset="1" stop-color="#86bd68"/></radialGradient>
<linearGradient id="ogArr" x1="0" y1="0" x2="0" y2="1"><stop offset="0" stop-color="#b4e2fc"/><stop offset=".5" stop-color="#7cc2f0"/><stop offset="1" stop-color="#3f8ed0"/></linearGradient>
<linearGradient id="ogFun" x1="0" y1="0" x2="1" y2="0"><stop offset="0" stop-color="#8a8a8a"/><stop offset=".35" stop-color="#f4f4f4"/><stop offset=".7" stop-color="#9a9a9a"/><stop offset="1" stop-color="#6a6a6a"/></linearGradient>
<linearGradient id="ogCyl" x1="0" y1="0" x2="1" y2="0"><stop offset="0" stop-color="#4a8cc4"/><stop offset=".4" stop-color="#b8dcf4"/><stop offset="1" stop-color="#2f6ea6"/></linearGradient>
<radialGradient id="ogGold" cx=".5" cy=".5" r=".6"><stop offset="0" stop-color="#fff6d8"/><stop offset=".55" stop-color="#f6d46a"/><stop offset="1" stop-color="#d8a420"/></radialGradient>
<radialGradient id="ogClock" cx=".45" cy=".45" r=".6"><stop offset="0" stop-color="#ffffff"/><stop offset=".7" stop-color="#dfe8f8"/><stop offset="1" stop-color="#b8c8ea"/></radialGradient>
<linearGradient id="ogDoc" x1="0" y1="0" x2="1" y2="1"><stop offset="0" stop-color="#ffffff"/><stop offset="1" stop-color="#cfe0f0"/></linearGradient>
<linearGradient id="ogSb" x1="0" y1="0" x2="1" y2="0"><stop offset="0" stop-color="#f6f2e0"/><stop offset=".5" stop-color="#efe9cf"/><stop offset="1" stop-color="#e4dcb8"/></linearGradient>
<linearGradient id="ogSbBtn" x1="0" y1="0" x2="1" y2="1"><stop offset="0" stop-color="#fbf9ee"/><stop offset="1" stop-color="#ebe5c8"/></linearGradient>
<linearGradient id="ogTri" x1="0" y1="0" x2="0" y2="1"><stop offset="0" stop-color="#b8b8b8"/><stop offset="1" stop-color="#787878"/></linearGradient>
<linearGradient id="ogTriD" x1="0" y1="0" x2="0" y2="1"><stop offset="0" stop-color="#787878"/><stop offset="1" stop-color="#b8b8b8"/></linearGradient>
<linearGradient id="ogKey" x1="0" y1="0" x2="0" y2="1"><stop offset="0" stop-color="#f2dc7c"/><stop offset=".55" stop-color="#dcb23c"/><stop offset="1" stop-color="#c88a30"/></linearGradient>
</defs>
<rect x="337.0" y="5.6000000000000005" width="2.6" height="4" rx="1.2" fill="#d4d4d4" stroke="#f4f4f4" stroke-width=".8"/><rect x="337.8" y="9.8" width="1" height="2.2" fill="#ececec"/><path d="M351 4.2L360 13.2M360 4.2L351 13.2" stroke="#1c1c1c" stroke-width="2.3" fill="none"/><path d="M56.8 29H62.199999999999996L59.5 32Z" fill="#3a2a10"/><circle cx="76.9" cy="30" r="7.3" fill="url(#ogGreen)" stroke="#8e8e8e" stroke-width="1.1"/><circle cx="76.9" cy="30" r="6.3" fill="none" stroke="#c4e0b4" stroke-width=".8" opacity=".8"/><path d="M72.958 28.7955H75.69550000000001V26.058H78.1045V28.7955H80.84200000000001V31.2045H78.1045V33.942H75.69550000000001V31.2045H72.958Z" fill="#fff"/><g transform="translate(99.8,30) rotate(-45)"><rect x="-4.2" y="-2.7" width="9.6" height="5.4" fill="#1d8a14"/><rect x="-4.2" y="-1.2" width="9.6" height="1.9" fill="#62d43e"/><rect x="2.6" y="-2.7" width="1" height="5.4" fill="#167010"/><path d="M-4.2 -2.7L-8.2 0L-4.2 2.7Z" fill="#fff"/><path d="M-6.6 -1.1L-8.4 0L-6.6 1.1Z" fill="#15680f"/><path d="M-4.2 -2.7L-8.2 0L-4.2 2.7" fill="none" stroke="#1d8a14" stroke-width=".7"/></g><path d="M116.5 23.8H124.2L127.6 27.2V36.3H116.5Z" fill="url(#ogDoc)" stroke="#6f96bc" stroke-width="1"/><path d="M124.2 23.8V27.2H127.6" fill="#c8dcee" stroke="#6f96bc" stroke-width=".7"/><rect x="118.4" y="25.7" width="4.6" height="1" fill="#9ab0c8"/><rect x="118.4" y="27.8" width="4.6" height="1" fill="#9ab0c8"/><rect x="118.4" y="29.9" width="3" height="1" fill="#9ab0c8"/><rect x="118.4" y="32.0" width="3" height="1" fill="#9ab0c8"/><rect x="118.4" y="34.1" width="3" height="1" fill="#9ab0c8"/><circle cx="126.3" cy="32.9" r="4.5" fill="#62ae42" stroke="#7a9a6a" stroke-width="1.1"/><circle cx="126.3" cy="32.9" r="3.5" fill="none" stroke="#c4e0b4" stroke-width=".8" opacity=".8"/><path d="M123.86999999999999 32.1575H125.55749999999999V30.47H127.0425V32.1575H128.73V33.6425H127.0425V35.33H125.55749999999999V33.6425H123.86999999999999Z" fill="#fff"/><path d="M141.3 26.4L149.8 34.8M149.8 26.4L141.3 34.8" stroke="#e2594a" stroke-width="2.8" stroke-linecap="round" fill="none"/><path d="M141.5 26.6L149.6 34.6M149.6 26.6L141.5 34.6" stroke="#f3988c" stroke-width="1" stroke-linecap="round" fill="none"/><path d="M168.5 24.1L175 30.6H172V35.1Q172 35.9 171.2 35.9H165.8Q165 35.9 165 35.1V30.6H162Z" fill="url(#ogArr)" stroke="#2d6c9e" stroke-width="1" stroke-linejoin="round"/><path d="M191.5 35.9L198 29.4H195V24.9Q195 24.1 194.2 24.1H188.8Q188 24.1 188 24.9V29.4H185Z" fill="url(#ogArr)" stroke="#2d6c9e" stroke-width="1" stroke-linejoin="round"/><rect x="208.5" y="23.7" width="12" height="12.8" rx=".8" fill="#f8fbfe" stroke="#7d9cb4" stroke-width="1"/><rect x="210" y="25" width="2" height="1" fill="#5a94d0"/><rect x="213" y="25" width="4" height="1" fill="#9c9c9c"/><rect x="210" y="27" width="2" height="1" fill="#5a94d0"/><rect x="213" y="27" width="4" height="1" fill="#9c9c9c"/><rect x="210" y="29" width="2" height="1" fill="#5a94d0"/><rect x="213" y="29" width="4" height="1" fill="#9c9c9c"/><rect x="210" y="31" width="2" height="1" fill="#5a94d0"/><rect x="213" y="31" width="4" height="1" fill="#9c9c9c"/><rect x="210" y="33" width="2" height="1" fill="#5a94d0"/><rect x="213" y="33" width="2" height="1" fill="#9c9c9c"/><rect x="217.8" y="23.4" width="1.4" height="12" fill="#1d3c54"/><path d="M215.2 34.0H221.8L218.5 37.6Z" fill="#1d3c54"/><path d="M230.2 22.6H243.79999999999998V23.8L238.768 28.424V33.0Q237.136 34.4 235.504 33.0V28.424L230.2 23.8Z" fill="url(#ogFun)" stroke="#6e6e6e" stroke-width=".6"/><rect x="230.2" y="22.200000000000003" width="13.6" height="1.2" rx=".5" fill="#777"/><rect x="239.3" y="27.5" width=".8" height="9.4" fill="#8a8a8a"/><rect x="241" y="28" width="2.4" height="1.1" fill="#f2c830"/><rect x="243.8" y="28" width="1.2" height="1.1" fill="#c8c8c8"/><rect x="239.4" y="28" width="1.1" height="1.1" fill="#8a8a8a"/><rect x="241" y="31" width="2.4" height="1.1" fill="#c0642a"/><rect x="243.8" y="31" width="1.2" height="1.1" fill="#c8c8c8"/><rect x="239.4" y="31" width="1.1" height="1.1" fill="#8a8a8a"/><rect x="243" y="33" width="2.4" height="1.1" fill="#2a9ad8"/><rect x="245.8" y="33" width="1.2" height="1.1" fill="#c8c8c8"/><rect x="241.4" y="33" width="1.1" height="1.1" fill="#8a8a8a"/><rect x="241" y="36" width="2.4" height="1.1" fill="#4a9a30"/><rect x="243.8" y="36" width="1.2" height="1.1" fill="#c8c8c8"/><rect x="239.4" y="36" width="1.1" height="1.1" fill="#8a8a8a"/><path d="M353.4 50.4L360.4 57.4M360.4 50.4L353.4 57.4" stroke="#6b4a08" stroke-width="1.7" fill="none"/><rect x="348.5" y="64" width="16" height="545" fill="#faf8ee" stroke="#cfc6a2" stroke-width="1"/><rect x="348.5" y="64.5" width="16" height="19.5" fill="url(#ogSbBtn)" stroke="#c5bb94" stroke-width="1"/><path d="M352.8 77.15H360.2L356.5 69.65Z" fill="url(#ogTri)"/><rect x="348.5" y="355.5" width="16" height="117" fill="url(#ogSb)" stroke="#c5bb94" stroke-width="1"/><circle cx="356.0" cy="414.0" r="1.9" fill="#c2ba9a"/><circle cx="356.5" cy="414.5" r="1.2" fill="#f1edd8"/><rect x="348.5" y="589.0" width="16" height="19.5" fill="url(#ogSbBtn)" stroke="#c5bb94" stroke-width="1"/><path d="M352.8 595.85H360.2L356.5 603.35Z" fill="url(#ogTriD)"/><rect x="0" y="609" width="365" height="1" fill="#b5a878"/><rect x="740.6" y="10.6" width="2.6" height="4" rx="1.2" fill="#d4d4d4" stroke="#f4f4f4" stroke-width=".8"/><rect x="741.4000000000001" y="14.799999999999999" width="1" height="2.2" fill="#ececec"/><path d="M755.2 9.2L764.2 18.2M764.2 9.2L755.2 18.2" stroke="#1c1c1c" stroke-width="2.3" fill="none"/><rect x="382" y="28" width="2" height="1" fill="#2a2a2a"/><rect x="381" y="29" width="1" height="5" fill="#2a2a2a"/><rect x="384" y="29" width="1" height="5" fill="#2a2a2a"/><rect x="381" y="31" width="4" height="1" fill="#2a2a2a"/><rect x="381" y="37" width="4" height="1" fill="#2a2a2a"/><rect x="381" y="42" width="4" height="1" fill="#2a2a2a"/><rect x="384" y="38" width="1" height="1" fill="#2a2a2a"/><rect x="383" y="39" width="1" height="1" fill="#2a2a2a"/><rect x="382" y="40" width="1" height="1" fill="#2a2a2a"/><rect x="381" y="41" width="1" height="1" fill="#2a2a2a"/><rect x="388" y="28" width="1" height="1" fill="#2c6cae"/><rect x="390" y="28" width="1" height="1" fill="#2c6cae" opacity=".7"/><rect x="389" y="29" width="1" height="1" fill="#2c6cae"/><rect x="389" y="29" width="1" height="1" fill="#2c6cae" opacity=".7"/><rect x="388" y="30" width="1" height="1" fill="#2c6cae"/><rect x="390" y="30" width="1" height="1" fill="#2c6cae" opacity=".7"/><rect x="389" y="31" width="1" height="1" fill="#2c6cae"/><rect x="389" y="31" width="1" height="1" fill="#2c6cae" opacity=".7"/><rect x="389" y="32" width="1" height="9" fill="#2c6cae"/><path d="M386.8 39.6H392.2L389.5 43Z" fill="#2c6cae"/><rect x="398.5" y="24.5" width="21" height="21" fill="#e9e3c8" stroke="#b1a577" stroke-width="1"/><rect x="401" y="27.6" width="4.6" height="1.6" fill="#4d6b88"/><path d="M402.5 29.2V39.8H405M402.5 31.3H405M405.5 33V36.6M405.5 33.9H408M405.5 36.4H408" stroke="#9a9a9a" stroke-width=".8" fill="none"/><rect x="405" y="30.5" width="4.6" height="1.6" fill="#4d6b88"/><rect x="408" y="33.1" width="5" height="1.6" fill="#6aa8d8"/><rect x="408" y="35.6" width="5" height="1.6" fill="#6aa8d8"/><rect x="405" y="39" width="4.6" height="1.6" fill="#4d6b88"/><rect x="413" y="28" width="1" height="1" fill="#2c6cae"/><rect x="415" y="28" width="1" height="1" fill="#2c6cae" opacity=".7"/><rect x="414" y="29" width="1" height="1" fill="#2c6cae"/><rect x="414" y="29" width="1" height="1" fill="#2c6cae" opacity=".7"/><rect x="413" y="30" width="1" height="1" fill="#2c6cae"/><rect x="415" y="30" width="1" height="1" fill="#2c6cae" opacity=".7"/><rect x="414" y="31" width="1" height="1" fill="#2c6cae"/><rect x="414" y="31" width="1" height="1" fill="#2c6cae" opacity=".7"/><rect x="414" y="32" width="1" height="9" fill="#2c6cae"/><path d="M411.8 39.6H417.2L414.5 43Z" fill="#2c6cae"/><path d="M429 31.5H437.4L440 34V42.5H429Z" fill="#f4f8fc" stroke="#88a8c8" stroke-width="1"/><rect x="434.4" y="33.8" width="1.2" height="1.1" fill="#e03a30"/><rect x="436.2" y="33.8" width="1.2" height="1.1" fill="#e03a30"/><rect x="434.4" y="36" width="1.2" height="1.1" fill="#e03a30"/><rect x="436.2" y="36" width="1.2" height="1.1" fill="#e03a30"/><rect x="434.4" y="38.2" width="3.4" height=".9" fill="#b0b8c4"/><rect x="430.6" y="40.2" width="7.2" height=".9" fill="#b0b8c4"/><path d="M424.4 27.6H438.0V28.8L432.96799999999996 33.32V37.800000000000004Q431.33599999999996 39.2 429.70399999999995 37.800000000000004V33.32L424.4 28.8Z" fill="url(#ogFun)" stroke="#6e6e6e" stroke-width=".6"/><rect x="424.4" y="27.200000000000003" width="13.6" height="1.2" rx=".5" fill="#777"/><rect x="445" y="26" width="1" height="18" fill="#c4ba94"/><rect x="446" y="26" width="1" height="18" fill="#fbf9ee"/><path d="M455.4 31L464.4 39.4M464.4 31L455.4 39.4" stroke="#ab9c9c" stroke-width="2" fill="none"/><path d="M479.4 34.2L482.2 37L487 32.2" stroke="#9fb09c" stroke-width="2" fill="none"/><path d="M757.2 53.2L764.0 60.0M764.0 53.2L757.2 60.0" stroke="#6b4a08" stroke-width="1.7" fill="none"/><path d="M376.2 75.2H383L379.6 79Z" fill="#000"/><path d="M376.2 488.2H383L379.6 492Z" fill="#000"/><path d="M411 162.5h2.5M411 174.5h2.5M411.5 162.5v12" stroke="#000" stroke-width="1" fill="none"/><path d="M724.3 167.1H731.6999999999999L728.0 170.9Z" fill="#6b4a08"/><rect x="738.6" y="172" width="2" height="2" fill="#6b4a08"/><rect x="742.6" y="172" width="2" height="2" fill="#6b4a08"/><rect x="746.6" y="172" width="2" height="2" fill="#6b4a08"/><path d="M376.2 186.2H383L379.6 190Z" fill="#000"/><path d="M739.5 376.6H746.9L743.2 380.4Z" fill="#6b4a08"/><path d="M739.5 396.6H746.9L743.2 400.4Z" fill="#6b4a08"/><path d="M739.5 429.6H746.9L743.2 433.4Z" fill="#b4b0a0"/><path d="M739.5 449.6H746.9L743.2 453.4Z" fill="#6b4a08"/><path d="M739.5 469.6H746.9L743.2 473.4Z" fill="#b4b0a0"/><rect x="753.5" y="68" width="15" height="491" fill="#faf8ee" stroke="#cfc6a2" stroke-width="1"/><rect x="753.5" y="68.5" width="15" height="19.5" fill="url(#ogSbBtn)" stroke="#c5bb94" stroke-width="1"/><path d="M757.3 81.15H764.7L761.0 73.65Z" fill="#c6c4b8"/><rect x="753.5" y="88.5" width="15" height="308" fill="url(#ogSb)" stroke="#c5bb94" stroke-width="1"/><circle cx="760.5" cy="242.5" r="1.9" fill="#c2ba9a"/><circle cx="761.0" cy="243.0" r="1.2" fill="#f1edd8"/><rect x="753.5" y="538.5" width="15" height="19.5" fill="url(#ogSbBtn)" stroke="#c5bb94" stroke-width="1"/><path d="M757.3 545.35H764.7L761.0 552.85Z" fill="url(#ogTriD)"/><rect x="743.1" y="179" width="15" height="190" fill="#faf8ee" stroke="#cfc6a2" stroke-width="1"/><rect x="743.1" y="179.0" width="15" height="20" fill="url(#ogSbBtn)" stroke="#c5bb94" stroke-width="1"/><path d="M746.9 191.9H754.3000000000001L750.6 184.4Z" fill="url(#ogTri)"/><rect x="743.1" y="213.5" width="15" height="15" fill="url(#ogSb)" stroke="#c5bb94" stroke-width="1"/><circle cx="750.1" cy="221.0" r="1.9" fill="#c2ba9a"/><circle cx="750.6" cy="221.5" r="1.2" fill="#f1edd8"/><rect x="743.1" y="349.5" width="15" height="19.5" fill="url(#ogSbBtn)" stroke="#c5bb94" stroke-width="1"/><path d="M746.9 356.35H754.3000000000001L750.6 363.85Z" fill="url(#ogTriD)"/></svg>
</body></html>
